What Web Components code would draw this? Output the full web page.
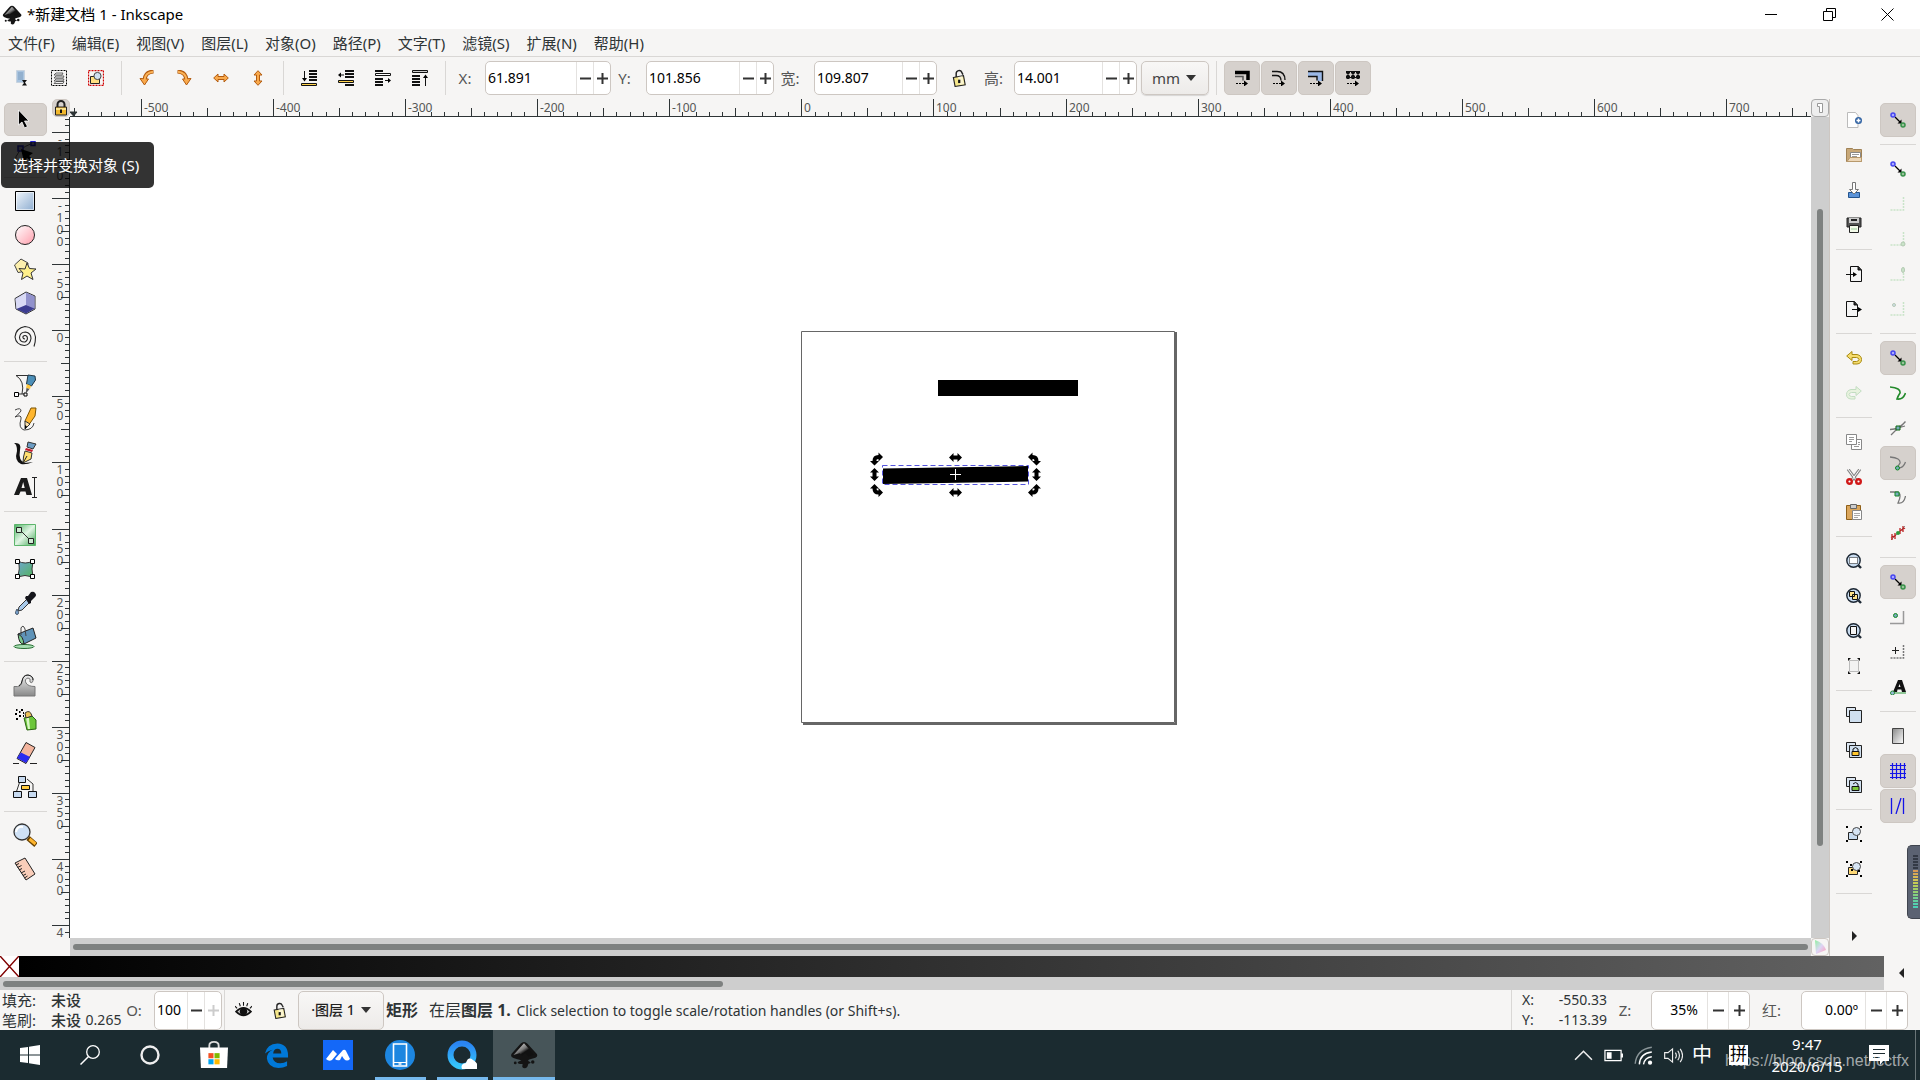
<!DOCTYPE html>
<html lang="zh-CN">
<head>
<meta charset="utf-8">
<title>*新建文档 1 - Inkscape</title>
<style>
  html, body { margin: 0; height: 100%; }
  body {
    display: flex;
    flex-direction: column;
    overflow: hidden;
    background: #f6f5f4;
    color: #2e3436;
    font: 15px/20px "Noto Sans", "Noto Sans CJK SC", sans-serif;
    --line: #d9d7d5;
    --edge: #cdc7c2;
    --trough: #cecece;
    --thumb: #7e8180;
  }
  main { flex: 1; min-height: 0; display: flex; }
  ink-desktop { flex: 1; min-width: 0; }
</style>
</head>
<body>
  <title-bar>*新建文档 1 - Inkscape</title-bar>
  <menu-bar></menu-bar>
  <select-toolbar></select-toolbar>
  <main>
    <tool-box></tool-box>
    <ink-desktop></ink-desktop>
    <command-bar></command-bar>
    <snap-bar></snap-bar>
  </main>
  <color-palette></color-palette>
  <status-bar></status-bar>
  <task-bar></task-bar>
  <tool-tip>选择并变换对象 (S)</tool-tip>
  <level-meter></level-meter>

<script>
const LOCK_OPEN = `<path d="M5.5 7V4a2.600 2.600 0 0 1 5-1l1 2" fill="none" stroke="#222" stroke-width="1.3"/><path d="M3 7.5l9-1.500 1.500 8-9 1.500z" fill="#f5e68a" stroke="#222"/><path d="M7 7l4-.7L12.500 13.500 9 14z" fill="#fff" opacity=".6"/><path d="M8.200 9.500v3" stroke="#111" stroke-width="2"/>`;
const NODES = `<path d="M5 5l6 6" stroke="#000" stroke-width="1.3"/><path d="M11.500 7.500v4h-4z" fill="#000"/><circle cx="3" cy="3" r="2" fill="#aaf" stroke="#4646f0" stroke-width="1.5"/><circle cx="13" cy="13" r="2" fill="#9bc29b" stroke="#38924a" stroke-width="1.5"/>`;
const LENS = `<circle cx="7.5" cy="7.5" r="6.7" fill="#c9dcf0" stroke="#1c2733" stroke-width="1.4"/><path d="M12.500 12.500l2.500 2.500" stroke="#1c2733" stroke-width="2.4"/>`;
const DUP = `<path d="M.5 .5h9v9h-9z" fill="#dbe6f2" stroke="#222"/><path d="M3.500 3.500h12v12h-12z" fill="#cfdfef" stroke="#222"/>`;
const CORNERS = `<path d="M0 0h2v2H0zM14 0h2v2h-2zM0 14h2v2H0zM14 14h2v2h-2z" fill="#000"/>`;
const CORNER_DOTS = `<path d="M13.500 1v13H0" fill="none" stroke="#8c8" stroke-dasharray="2 1" stroke-width="1.5"/>`;
const LOGO = `<linearGradient id="g" x1="0" y1="0" x2="1" y2="1"><stop offset="0" stop-color="#fff"/><stop offset=".45" stop-color="#777"/><stop offset=".6" stop-color="#111"/></linearGradient>
  <path d="M8 .5Q9 .5 10 1.600L15.200 7.300Q16.200 8.700 14.500 9.500L11 10.500Q9.500 11.200 11.500 12Q12.500 12.800 10.500 13L10 14.500Q8.500 16.500 7 14.800L7.200 13.200Q4 13.200 4.500 12L6.500 11Q4 10.600 2 9.700Q0 9 .9 7.300L6 1.600Q7 .5 8 .5z" fill="#141414"/>
  <path d="M8 1.300L13.800 7.800 10.500 9 8.800 7 7 8.600 5.500 7 2 8z" fill="url(#g)"/>
  <circle cx="13" cy="12" r="1" fill="#141414"/><circle cx="3" cy="12.5" r=".8" fill="#141414"/>`;

// every drawing is [view box size, markup]
const ICONS = {
  logo: [16, LOGO],
  selectAll: [16, `<path d="M2.500 .5h8v12h-8z" fill="#a9c4df" stroke="#c7d3df"/><path d="M4 3h5M4 5h5M4 7h5M4 9h5" stroke="#7d9dbe"/><path d="M8 10h5l-2 2.500 2 3H8l2-2.500z" fill="#111"/>`],
  selectLayers: [16, `<path d="M.5 .5h15v15H.5z" fill="none" stroke="#000" stroke-dasharray="2 1"/><path d="M3 5l2-2h7l-1 2zM3 8l2-2h8l-1 2zM3 11l2-2h8l-1 2zM3 13.500l2-2h8l-1 2z" fill="#eee" stroke="#444" stroke-width=".8"/>`],
  deselect: [16, `<path d="M.5 .5h15v15H.5z" fill="none" stroke="#d00000" stroke-width="1.3" stroke-dasharray="2 1"/><path d="M2.500 6.500h9v7h-9z" fill="#ffdf80" stroke="#222"/><circle cx="9.5" cy="6" r="3.6" fill="#cfe0f2" stroke="#444"/>`],
  rotateLeft: [16, `<path d="M14.500 1.500Q6 2 5.500 10" fill="none" stroke="#b35c10" stroke-width="4"/><path d="M1 8.500l4.500 6.500 4-6z" fill="#f9a94b" stroke="#b35c10"/><path d="M14 1.700Q6 2.500 5.500 10" fill="none" stroke="#fbb257" stroke-width="2"/>`],
  rotateRight: [16, `<path d="M1.500 1.500Q10 2 10.500 10" fill="none" stroke="#b35c10" stroke-width="4"/><path d="M15 8.500l-4.500 6.500-4-6z" fill="#f9a94b" stroke="#b35c10"/><path d="M2 1.700Q10 2.500 10.500 10" fill="none" stroke="#fbb257" stroke-width="2"/>`],
  flipH: [16, `<path d="M.7 8l4.300-4v2.500h6V4l4.300 4-4.300 4V9.500H5V12z" fill="#f9a94b" stroke="#b35c10"/>`],
  flipV: [16, `<path d="M8 .7l4 4.300H9.500v6H12l-4 4.300L4 11h2.500V5H4z" fill="#f9a94b" stroke="#b35c10"/>`],
  toBottom: [16, `<path d="M8 1h8M8 4h8M8 7h8M8 10h8" stroke="#111" stroke-width="2"/><path d="M.5 13.500h15v2H.5z" fill="#ffd24a" stroke="#111"/><path d="M3.500 1v8" stroke="#111"/><path d="M1 8h5l-2.500 3.500z"/>`],
  lower: [16, `<path d="M7 1h9M7 4h9M7 7h9M7 15h9" stroke="#111" stroke-width="2"/><path d="M.5 10.500h15v2H.5z" fill="#ffd24a" stroke="#111"/><path d="M3 5h3" stroke="#111"/><path d="M0 5l3-2.500v5z"/>`],
  raise: [16, `<path d="M0 1h8M0 9h8M0 12h8M0 15h8" stroke="#111" stroke-width="2"/><path d="M.5 3.500h15v2H.5z" fill="#fff" stroke="#111"/><path d="M10 10.500h4" stroke="#111"/><path d="M16 10.500l-3-2.500v5z"/>`],
  toTop: [16, `<path d="M0 6h8M0 9h8M0 12h8M0 15h8" stroke="#111" stroke-width="2"/><path d="M.5 .5h15v2H.5z" fill="#ccc" stroke="#111"/><path d="M13.500 7v9" stroke="#111"/><path d="M11 8h5l-2.500-3.500z"/>`],
  lockOpen: [16, LOCK_OPEN],
  scaleStroke: [16, `<path d="M1 2.500h13V10" fill="none" stroke="#000" stroke-width="3.5"/><path d="M1 6.500h8v4" fill="none" stroke="#555" stroke-width="1.5"/><path d="M2 13.500h8" stroke="#000" stroke-dasharray="2 1"/><path d="M10 10.500l4 3-4 3z"/>`],
  scaleCorners: [16, `<path d="M1 1.500h5Q14 1.500 14 10M1 5.500h4Q10 5.500 10 10.500" fill="none" stroke="#111" stroke-width="1.3"/><path d="M2 13.500h8" stroke="#000" stroke-dasharray="2 1"/><path d="M10 10.500l4 3-4 3z"/>`],
  moveGradient: [16, `<path d="M0 2h14v9h-5V7H0z" fill="#9bb8e6"/><path d="M0 1.500h14.500V11M0 6.500h9v4" fill="none" stroke="#111" stroke-width="1.4"/><path d="M2 13.500h8" stroke="#000" stroke-dasharray="2 1"/><path d="M10 10.500l4 3-4 3z"/>`],
  movePattern: [16, `<path d="M1 1h14v2H1zM1 6h14v2H1z" fill="#111"/><path d="M3 1v8M8 1v8M13 1v8" stroke="#111" stroke-width="3"/><path d="M5 2h1v1H5zM10 2h1v1h-1zM5 6h1v1H5zM10 6h1v1h-1zM0 4h16v1H0z" fill="#d6d1cd"/><path d="M3 3v3M8 3v3M13 3v3" stroke="#111"/><path d="M2 13.500h8" stroke="#000" stroke-dasharray="2 1"/><path d="M10 10.500l4 3-4 3z"/>`],

  arrow: [24, `<path d="M5.500 3v15l3.500-3 2.500 6 3-1.500-3-5.500H16z" fill="#000" stroke="#fff" stroke-width=".8"/>`],
  node: [24, `<path d="M2 22Q2 8 20 2" fill="none" stroke="#555"/><path d="M5 5h5v5H5zM18 .5h4v4h-4z" fill="#aac" stroke="#22c" stroke-width="1.5"/><path d="M8 8l3 13 3-4 6 5 2-2-6-5 4-3z"/>`],
  rect: [24, `<linearGradient id="g" x2="1" y2="1"><stop stop-color="#f2f7fc"/><stop offset="1" stop-color="#8cacd0"/></linearGradient><path d="M2.500 2.500h19v19h-19z" fill="url(#g)" stroke="#000"/><path d="M3.500 3.500h17v17h-17z" fill="none" stroke="#fff" opacity=".6"/>`],
  circle: [24, `<linearGradient id="g" x2="1" y2="1"><stop stop-color="#fff"/><stop offset="1" stop-color="#ff9eac"/></linearGradient><circle cx="12" cy="12" r="9.5" fill="url(#g)" stroke="#222"/>`],
  star: [24, `<path d="M1.500 8L8 2l7 4-1 8-9 1.500z" fill="#fdf0ae" stroke="#444"/><path d="M14 6l2.500 5.500 6.500.5-5 4 2 6.500-6-3.500-5.500 3.500 1.500-6.500-4-4.500 6 .5z" fill="#fff08a" stroke="#333"/>`],
  cube: [24, `<path d="M2 7.500L13 1l9 4v13l-9 5-10-5z" fill="#c3c4ea" stroke="#333"/><path d="M13 1.500l8.500 4v12L13 14z" fill="#9292cc"/><path d="M2.500 8L13 2v12L3.500 18z" fill="#d9daf5"/><path d="M3.500 18L13 14l8.500 3.500L13 22.500z" fill="#3c3c90"/>`],
  spiral: [24, `<path d="M12 14Q9.500 13.500 10 11.500Q12 9.500 14 11.500Q15.500 15 12 17Q7 17.500 6.500 12.500Q7 7 12.500 7Q18 8 18 13.500Q17 20 11.500 20.500Q3 20 2 12Q3 3 12 1.500Q21 2 22.500 12Q22.500 18 21 21.500" fill="none" stroke="#222" stroke-width="1.1"/>`],
  pen: [24, `<path d="M3 2.500h13M3 2.500Q12 8 9 21M5 21h7" fill="none" stroke="#333"/><path d="M1.500 19.500h4v4h-4zM11 20h3v3h-3z" fill="#fff" stroke="#000"/><path d="M15 2l7 1 .5 4-4 6-5-2z" fill="#4c8fb8" stroke="#1f3442"/><path d="M14 11l4 2-1 3-4-1z" fill="#ffc83d"/><path d="M13.500 15l3 1-4 5z" fill="#555"/>`],
  pencil: [24, `<path d="M2 3Q8 0 8 4Q4 9 2 10Q9 7 8 12Q5 21 11 23Q20 23 21 16" fill="none" stroke="#444"/><path d="M12 14L18 1h5l-1 8-7 10z" fill="#ffb62e" stroke="#7b5300"/><path d="M12 14l5 3-5 5z" fill="#fbe0a9" stroke="#333"/><path d="M12 18l2 1.500L12 22z"/>`],
  calligraphy: [24, `<path d="M1 2Q9 1 7 9Q5 20 12 22L20 21Q13 24 8 23Q1 20 4 10Q4 3 1 2z" fill="#111"/><path d="M15 1l8 2-3 5-6-2z" fill="#6d9dc4" stroke="#333"/><path d="M13 7l7 2-1 2-7-2z" fill="#c41a2b"/><path d="M12 10l7 2-1 6-8 4 .5-6z" fill="#ffe070" stroke="#333"/><path d="M10 22l4-7" stroke="#222"/>`],
  text: [24, `<path d="M1 20L8 3h6l5 17h-5.500l-1-3.500H7.500L6 20zM8.500 13h3.200l-1.500-6z" fill="#1b1b1b" fill-rule="evenodd"/><path d="M19 2.500h5M19 22.500h5M21.500 3v19" stroke="#222"/>`],
  gradient: [24, `<linearGradient id="g" x2="1" y2="1"><stop stop-color="#4fb466"/><stop offset=".5" stop-color="#e2f5e4"/><stop offset="1" stop-color="#3ea553"/></linearGradient><path d="M1.500 1.500h21v21h-21z" fill="url(#g)" stroke="#5db56c"/><path d="M7 7l10 10" stroke="#333"/><path d="M3.500 4.500h5v5h-5zM15.500 15.500h5v5h-5z" fill="#cfe9d3" stroke="#222"/>`],
  mesh: [24, `<linearGradient id="g" x2="1" y2="1"><stop stop-color="#6fa5d3"/><stop offset="1" stop-color="#54b45e"/></linearGradient><path d="M5 4Q12 8 20 4Q18 12 20 20Q12 17 4 20Q8 12 5 4z" fill="url(#g)" stroke="#333"/><path d="M2.500 2.500h4v4h-4zM17.500 2.500h4v4h-4zM2.500 17.500h4v4h-4zM17.500 17.500h4v4h-4z" fill="#fff" stroke="#000"/>`],
  dropper: [24, `<path d="M6 16L15 7l3 3-9 9-4 1z" fill="#a8c9ea" stroke="#333"/><path d="M13 5l2 0 3-4q3-1 4 1 2 2 0 4l-4 4v2l-2 1-4-6z" fill="#15151b"/><path d="M4 18q-3 5 0 5.500q3-.5 0-5.500" fill="#7ea9d8" stroke="#456"/>`],
  bucket: [24, `<ellipse cx="11" cy="21.5" rx="10" ry="2" fill="#a8e0b3" stroke="#2a6e35"/><path d="M5 9l15-6 3 10-12 6z" fill="#5f93b8" stroke="#222"/><path d="M5 9q5 2 6 10-5 1-6-10" fill="#7bc78b" stroke="#222"/><path d="M8 10V3q2-4 4 1l1 7" fill="none" stroke="#444"/>`],
  tweak: [24, `<linearGradient id="g" x2="0" y2="1"><stop stop-color="#eee"/><stop offset="1" stop-color="#888"/></linearGradient><path d="M1 13.500q8 1 8-5Q10 2 15 2q6 1 5 6-1 3-3 1 1-4-2-4-4 1-2 5 2 3.500 9 3.500V23H1z" fill="url(#g)" stroke="#777"/><path d="M6 13Q9 10 9 8Q10 2 15 2q5 1 5 5" fill="none" stroke="#222"/>`],
  spray: [24, `<path d="M3 3h1.500M6 5h1.500M2 7h2M8 3h2M6 9h2M10 6h1M3 12h2M10 9h1" stroke="#000" stroke-width="2"/><path d="M11 11l8-2 4 4v9l-9 1z" fill="#6cc63a" stroke="#2a6413"/><path d="M13 11l3 0 1 11h-2z" fill="#d8f7c4"/><path d="M12 6q5-4 7 3l-6 2z" fill="#edc35a" stroke="#333"/>`],
  eraser: [24, `<path d="M13 1.500l9 5-9 16-9-5z" fill="#f3b49d" stroke="#222"/><path d="M8 11.500l9 4.500-4 6-9-5z" fill="#2b2bf0"/><path d="M0 22.500h6M17 22.500h7" stroke="#222"/>`],
  connector: [24, `<path d="M7 6L3 18M14 4l6 5v9" fill="none" stroke="#333"/><path d="M5.500 1.500h7v6h-7zM.5 16.500h8v6h-8zM15.500 16.500h8v6h-8z" fill="#c7daf0" stroke="#111"/><path d="M8.500 10.500h8v4h-8z" fill="#ffcb3e" stroke="#111"/>`],
  zoomTool: [24, `<circle cx="9" cy="9" r="8" fill="#cfe1f5" stroke="#333" stroke-width="1.3"/><path d="M3 9q1-6 7-5" fill="none" stroke="#fff" stroke-width="2"/><path d="M15 15l8 7" stroke="#6a4200" stroke-width="5"/><path d="M16.500 16l6 5" stroke="#ffb52d" stroke-width="3"/>`],
  measure: [24, `<path d="M2 6l10-5 10 16-9 6z" fill="#f9cdb9" stroke="#222"/><path d="M3 8l3-1.500M4.500 10.500l4-2M6 13l3-1.500M8 16l4-2M10 18.500l3-1.500M11.500 21l3-2" stroke="#222"/>`],

  newDoc: [16, `<path d="M1.500 .5h8l2.500 3v12H1.500z" fill="#fff" stroke="#bbb"/><circle cx="12.5" cy="8.5" r="3.5" fill="#3465a4"/><path d="M12.500 6.500v4M10.500 8.500h4" stroke="#fff" stroke-width="1.5"/>`],
  open: [16, `<path d="M.5 1.500h6l1 1h8v12H.5z" fill="#c8a878" stroke="#a08256"/><path d="M4.500 5.500h10v5h-10z" fill="#fff" stroke="#888"/><path d="M6 7.500h7M6 9.500h5" stroke="#999"/><path d="M1 14.500l3-4h11.500v4z" fill="#edd7b8" stroke="#b8996c"/>`],
  save: [16, `<path d="M2.500 10.500h11v5h-11z" fill="#5b93d8" stroke="#23548f"/><path d="M6.500 .5h3v7h3L8 12 3.500 7.500h3z" fill="#fff" stroke="#777"/>`],
  print: [16, `<path d="M1 1h14v9H1z" fill="#555" stroke="#222"/><path d="M3 1h10v5H3z" fill="#ccc"/><path d="M5 3h6" stroke="#222" stroke-width="2"/><path d="M3.500 8.500h9v7h-9z" fill="#f4fbea" stroke="#222"/><path d="M5 12h6" stroke="#9c9"/>`],
  importDoc: [16, `<path d="M4.500 .5h8l3 3.500v11.500h-11z" fill="#f4f4f4" stroke="#111"/><path d="M12 .5V4h3.500" fill="#222" stroke="#111"/><path d="M0 8.500h8" stroke="#111"/><path d="M7 6l4 2.500L7 11z"/>`],
  exportDoc: [16, `<path d="M.5 .5h8l3 3.500v11.500H.5z" fill="#f4f4f4" stroke="#111"/><path d="M8 .5V4h3.500" fill="#222" stroke="#111"/><path d="M6 8.500h8" stroke="#111"/><path d="M12 6l4 2.500-4 2.500z"/>`],
  undo: [16, `<path d="M.7 6L6 1.500v3h5q4.500 1 4.500 5t-4.500 4.500H7v-2.500h3.500Q13 11 13 9.500T10.500 7.500H6v3z" fill="#f6dc6c" stroke="#a88a12"/>`],
  redo: [16, `<path d="M15.300 6L10 1.500v3H5Q.5 5.500.5 9.500T5 14h4v-2.500H5.500Q3 11 3 9.500t2.500-2H10v3z" fill="#d4f0c0" stroke="#7b7"/>`],
  copy: [16, `<path d="M5.500 5.500h10v10h-10z" fill="#fff" stroke="#888"/><path d="M.5 .5h10v10H.5z" fill="#fff" stroke="#888"/><path d="M3 3.500h5M3 5.500h5M3 7.500h3M12 8.500h2M12 10.500h2M8 12.500h5" stroke="#999"/>`],
  cut: [16, `<path d="M2 0l8 11M14 0L6 11" stroke="#888" stroke-width="3"/><path d="M2 0l8 11M14 0L6 11" stroke="#fff"/><circle cx="3.5" cy="12.5" r="2.3" fill="#fff" stroke="#d01818" stroke-width="2.4"/><circle cx="12.5" cy="12.5" r="2.3" fill="#fff" stroke="#d01818" stroke-width="2.4"/>`],
  paste: [16, `<path d="M.5 1.500h14v14H.5z" fill="#dba65c" stroke="#8f5f18"/><path d="M4.500 .5h6v4h-6z" fill="#ccc" stroke="#666"/><path d="M6.500 6.500h9v9h-9z" fill="#fff" stroke="#888"/><path d="M8 9.500h6M8 11.500h6M8 13.500h4" stroke="#aaa"/>`],
  zoomSel: [16, LENS + `<path d="M3.500 4.500h8v6h-8z" fill="#fff" stroke="#111" stroke-dasharray="1 1"/>`],
  zoomDraw: [16, LENS + `<path d="M3.500 3.500h5v5h-5zM6.500 6.500h5v5h-5z" fill="#ffe38a" stroke="#111"/>`],
  zoomPage: [16, LENS + `<path d="M4.500 3.500h6v8h-6z" fill="#f4f4f4" stroke="#111"/>`],
  fitPage: [16, `<path d="M3.500 2.500h9v11h-9z" fill="#f2f2f2" stroke="#bbb"/><path d="M2 0h3L2 3zM14 0h-3l3 3zM2 16h3l-3-3zM14 16h-3l3-3z" fill="#111"/>`],
  duplicate: [16, DUP],
  clone: [16, DUP + `<path d="M7 9V7q2.500-3 5 0v2" fill="none" stroke="#111"/><path d="M6 9.500h7v4H6z" fill="#ffc62e" stroke="#111"/>`],
  unlink: [16, DUP + `<path d="M7 7q2.500-3 5 0v2" fill="none" stroke="#111"/><path d="M6 9.500h7v4H6z" fill="#7cc83a" stroke="#111"/>`],
  group: [16, CORNERS + `<path d="M2.500 6.500h9v7h-9z" fill="#c9dcf0" stroke="#222"/><circle cx="10.5" cy="5.5" r="4" fill="#d7e5f4" stroke="#444"/>`],
  ungroup: [16, CORNERS + `<path d="M2.500 6.500h9v7h-9z" fill="#ffd976" stroke="#222"/><circle cx="10.5" cy="5.5" r="4" fill="#d7e5f4" stroke="#444"/><path d="M5 8h2v2H5zM12 9h2v2h-2zM4 3h2v2H4z"/>`],

  snap: [16, NODES],
  snapBox: [16, CORNER_DOTS],
  snapBoxCorner: [16, CORNER_DOTS + `<circle cx="13" cy="13" r="2" fill="#8c8" stroke="#585"/>`],
  snapBoxMid: [16, CORNER_DOTS + `<ellipse cx="13" cy="4" rx="1.5" ry="2.5" fill="#8c8" stroke="#585"/>`],
  snapBoxCenter: [16, CORNER_DOTS + `<circle cx="4" cy="4" r="1.5" fill="#9bd" stroke="#585"/>`],
  snapPath: [16, `<path d="M0 2Q11 3 10 8Q8 11 7 14Q13 15 15.500 8" fill="none" stroke="#238a2b" stroke-width="1.6"/>`],
  snapCross: [16, `<path d="M0 9.500q9 0 15.500-8M1 15l7-7 7-2" fill="none" stroke="#777" stroke-width="1.3"/><path d="M6 6h4v4H6z" fill="#7ab" stroke="#161"/>`],
  snapCusp: [16, `<path d="M0 2Q11 3 10 8L7 13Q13 14 15.500 7" fill="none" stroke="#777" stroke-width="1.3"/><circle cx="7.5" cy="13" r="2" fill="#7ab" stroke="#182"/>`],
  snapSmooth: [16, `<path d="M0 2h8q4 3 0 11 6 1 7.500-7" fill="none" stroke="#777" stroke-width="1.3"/><path d="M5 2h4v4H5z" fill="#7ab" stroke="#182"/>`],
  snapMid: [16, `<path d="M1 15L15 1" stroke="#888"/><path d="M2 9v6M5 8v6M1 13l5-3M10 3v6M13 1v6M10 6l5-3" stroke="#b22" stroke-width="1.3"/><circle cx="8" cy="8" r="2" fill="#2a9a3a"/>`],
  snapCenter: [16, `<path d="M13.500 2v12.500H0" fill="none" stroke="#999" stroke-width="1.5"/><circle cx="5.5" cy="6.5" r="2" fill="#7ab" stroke="#182"/>`],
  snapRotation: [16, `<path d="M13.500 1v13H0" fill="none" stroke="#777" stroke-width="1.5" stroke-dasharray="2 1"/><path d="M5.500 3v7M2 6.500h7" stroke="#222"/>`],
  snapText: [16, `<path d="M3 13L8 1h4l4 12h-4l-.7-2.500H7.500L7 13zM8.500 8h2l-1-3z" fill="#111" fill-rule="evenodd"/><path d="M3 14h13" stroke="#2a9a3a"/><circle cx="2.5" cy="14" r="2" fill="#9bd" stroke="#2a8a3a"/>`],
  snapPage: [16, `<linearGradient id="g" x2="1" y2="1"><stop stop-color="#888"/><stop offset="1" stop-color="#fff"/></linearGradient><path d="M2.500 .5h11v15h-11z" fill="url(#g)" stroke="#444"/>`],
  snapGrid: [16, `<path d="M0 2.500h16M0 6.500h16M0 10.500h16M0 14.500h16M2.500 0v16M6.500 0v16M10.500 0v16M14.500 0v16" stroke="#1414e8" stroke-width="1.2"/>`],
  snapGuide: [16, `<path d="M1.500 0v16M13.500 0v16M11 0L6 16" stroke="#1414e8" stroke-width="1.3"/>`],

  lockRuler: [16, `<path d="M4.500 7V4.500a3.500 3.500 0 0 1 7 0V7" fill="none" stroke="#222" stroke-width="2"/><path d="M2.500 7h11v8h-11z" fill="#f0b72c" stroke="#222"/><path d="M3 8h10v2H3z" fill="#fce28a"/><path d="M8 9.500v3.500" stroke="#111" stroke-width="2"/>`],
  eye: [16, `<path d="M1 9q7-7 14 0q-7 7-14 0z" fill="#ccc" stroke="#111" stroke-width="1.5"/><circle cx="8" cy="9" r="3.5" fill="#111"/><path d="M2 6L0 4M5 4L4 1M8 3.500V0M11 4l1-3M14 6l2-2" stroke="#111"/>`],

  windows: [20, `<path d="M0 3l8-1v7.500H0zM9 1.800L20 0v9.500H9zM0 10.500h8V18l-8-1zM9 10.500h11V20L9 18.200z" fill="#fff"/>`],
  search: [20, `<circle cx="13" cy="7" r="6.3" fill="none" stroke="#fff" stroke-width="1.3"/><path d="M8.500 11.500L.5 19.500" stroke="#fff" stroke-width="1.5"/>`],
  cortana: [20, `<circle cx="10" cy="10" r="8.5" fill="none" stroke="#eee" stroke-width="2.4"/>`],
  store: [30, `<path d="M10 9V5q0-4 5-4t5 4v4" fill="none" stroke="#ddd" stroke-width="2"/><path d="M0 7h30l-1 22H1z" fill="#fff"/><path d="M9 13h5.500v5.500H9z" fill="#f25022"/><path d="M15.500 13H21v5.500h-5.500z" fill="#7fba00"/><path d="M9 19.500h5.500V25H9z" fill="#00a4ef"/><path d="M15.500 19.500H21V25h-5.500z" fill="#ffb900"/>`],
  edge: [26, `<path d="M1 11Q3 1 14 0.500Q25 1 25 13v2H9q1 6 8 6 4 0 7-2v5q-4 2-9 2Q4 25 3 16q0-6 6-9Q4 8 1 11zM9.500 11H18q0-5-4-5t-4.500 5z" fill="#0078d7" fill-rule="evenodd"/>`],
  meeting: [30, `<path d="M0 0h30v30H0z" fill="#1468f8"/><path d="M3 19l7-9 4 4-5 6q-3 2-6-1zM12 19l8-9q2-1 3 1l4 8q-3 3-6 0l-2-3-2 4q-3 1-5-1z" fill="#fff"/>`],
  phone: [30, `<circle cx="15" cy="15" r="15" fill="#1d86e0"/><path d="M8.500 4h13v22h-13z" fill="none" stroke="#fff" stroke-width="1.6"/><path d="M8 22.500h14" stroke="#fff"/><path d="M13.500 24h3" stroke="#fff" stroke-width="1.5"/>`],
  qq: [30, `<linearGradient id="g" x2="0" y2="1"><stop stop-color="#2a84f2"/><stop offset="1" stop-color="#35c7fb"/></linearGradient><circle cx="15" cy="15" r="11.5" fill="none" stroke="url(#g)" stroke-width="6"/><path d="M15 29q-2-5 4-6 2-7 7-3 6 3 4 9z" fill="#fff"/>`],
  inkscape: [16, LOGO],
  chevron: [18, `<path d="M1 13l8-8 8 8" fill="none" stroke="#eee" stroke-width="1.5"/>`],
  battery: [20, `<path d="M1 4.500h17v11H1z" fill="none" stroke="#fff" stroke-width="1.3"/><path d="M18 8h2v4h-2zM3 6.500h5v7H3z" fill="#fff"/>`],
  wifi: [16, `<path d="M1 15Q2 3 15 1" fill="none" stroke="#8a9598" stroke-width="1.2"/><path d="M4.500 15.500Q5 6 15 5M8 15.500Q9 9.500 15 9" fill="none" stroke="#fff" stroke-width="1.2"/><circle cx="13.5" cy="14" r="1.8" fill="#fff"/>`],
  sound: [20, `<path d="M.7 7h3.500L9 3v14l-4.800-4H.7z" fill="none" stroke="#eee" stroke-width="1.2"/><path d="M12 7q2 3 0 6M14.500 5q3.500 5 0 10M17 3q5 7 0 14" fill="none" stroke="#eee" stroke-width="1.2"/>`],
  notice: [20, `<path d="M0 0h20v16h-6l-3 4v-4H0z" fill="#fff"/><path d="M4 4.500h12M4 8.500h12M4 12.500h7" stroke="#1c2b30" stroke-width="1.2"/>`]
};

class InkIcon extends HTMLElement {
  connectedCallback() {
    const [box, art] = ICONS[this.getAttribute('name')];
    this.attachShadow({ mode: 'open' }).innerHTML = `
      <style>
        :host { display: block; width: var(--icon, 16px); height: var(--icon, 16px); }
        svg { display: block; width: 100%; height: 100%; }
      </style>
      <svg viewBox="0 0 ${box} ${box}" aria-hidden="true">${art}</svg>`;
  }
}

class IconButton extends HTMLElement {
  connectedCallback() {
    const pressed = this.hasAttribute('pressed');
    this.attachShadow({ mode: 'open' }).innerHTML = `
      <style>
        :host { display: block; width: 36px; height: 34px; }
        button {
          display: grid; place-items: center; width: 100%; height: 100%; padding: var(--pad, 0);
          border: 1px solid transparent; border-radius: 5px; background: none; box-sizing: border-box;
        }
        button[aria-pressed=true] { background: #d6d1cd; border-color: var(--edge); }
        :host([faded]) ink-icon { opacity: .4; }
      </style>
      <button type="button" aria-label="${this.getAttribute('icon')}" aria-pressed="${pressed}">
        <ink-icon name="${this.getAttribute('icon')}"></ink-icon>
      </button>`;
  }
}

class SpinField extends HTMLElement {
  connectedCallback() {
    const get = name => this.getAttribute(name);
    this.attachShadow({ mode: 'open' }).innerHTML = `
      <style>
        :host { display: flex; align-items: center; height: 34px; color: #555; }
        label { box-sizing: border-box; width: var(--label, 32px); padding-right: 8px; text-align: center; white-space: nowrap; }
        div {
          display: flex; box-sizing: border-box; width: var(--box, 126px); height: 100%; overflow: hidden;
          border: 1px solid var(--edge); border-radius: 5px; background: #fff;
        }
        input {
          flex: 1; min-width: 0; padding: 0 var(--end, 2px) 0 2px; border: 0; background: none;
          font: inherit; font-size: 14px; color: #000; text-align: var(--align, left);
        }
        button {
          display: grid; place-items: center; width: var(--step, 17px); padding: 0;
          border: 0; border-left: 1px solid #e4e2e0; background: none; color: #333;
        }
        button:disabled { color: #ccc; }
        svg { width: 11px; height: 11px; }
      </style>
      <label for="value">${get('label')}</label>
      <div>
        <input id="value" value="${get('value')}">
        <button type="button" aria-label="-"><svg viewBox="0 0 11 11"><path d="M0 5.500h11" stroke="currentColor" stroke-width="2"/></svg></button>
        <button type="button" aria-label="+" ${this.hasAttribute('full') ? 'disabled' : ''}><svg viewBox="0 0 11 11"><path d="M0 5.500h11M5.500 0v11" stroke="currentColor" stroke-width="2"/></svg></button>
      </div>`;
  }
}

class TitleBar extends HTMLElement {
  connectedCallback() {
    this.attachShadow({ mode: 'open' }).innerHTML = `
      <style>
        :host { display: flex; align-items: center; height: 29px; padding-right: 4px; background: #fff; color: #000; }
        ink-icon { --icon: 20px; margin: 0 5px 0 2px; }
        span { flex: 1; line-height: 28px; height: 29px; }
        button { width: 58px; height: 29px; padding: 0; border: 0; background: none; }
        svg { display: block; margin: auto; }
        path { fill: none; stroke: #000; }
      </style>
      <ink-icon name="logo"></ink-icon>
      <span><slot></slot></span>
      <button aria-label="最小化"><svg width="13" height="13"><path d="M0 6.500h12"/></svg></button>
      <button aria-label="还原"><svg width="13" height="13"><path d="M.5 3.500h9v9h-9zM3.500 3.500v-3h9v9h-3"/></svg></button>
      <button aria-label="关闭"><svg width="13" height="13"><path d="M.5 .5l12 12M12.500 .5l-12 12"/></svg></button>`;
  }
}

class MenuBar extends HTMLElement {
  connectedCallback() {
    const menus = ['文件(F)', '编辑(E)', '视图(V)', '图层(L)', '对象(O)', '路径(P)', '文字(T)', '滤镜(S)', '扩展(N)', '帮助(H)'];
    this.attachShadow({ mode: 'open' }).innerHTML = `
      <style>
        :host { display: block; height: 27px; border-bottom: 1px solid var(--line); }
        nav { display: flex; height: 100%; }
        button { padding: 0 9px 0 8px; border: 0; background: none; font: inherit; color: inherit; white-space: nowrap; }
      </style>
      <nav>${menus.map(m => `<button type="button">${m}</button>`).join('')}</nav>`;
  }
}

class SelectToolbar extends HTMLElement {
  connectedCallback() {
    const group = (names, state = '') => names.map(n => `<icon-button icon="${n}" ${state}></icon-button>`).join('');
    this.attachShadow({ mode: 'open' }).innerHTML = `
      <style>
        :host { display: flex; align-items: center; height: 42px; padding: 0 4px; }
        .group { display: flex; gap: 1px; }
        hr { width: 1px; height: 34px; margin: 0 7px; border: 0; background: var(--line); }
        .y { --label: 35px; --box: 128px; }
        .w { --label: 40px; --box: 123px; }
        .h { --label: 33px; --box: 123px; }
        .lock { width: 44px; --icon: 18px; }
        .unit {
          width: 68px; height: 34px; margin-left: 4px; padding: 0 10px; border: 1px solid var(--edge); border-radius: 5px;
          background: linear-gradient(#f8f7f6, #edebe9); box-shadow: 0 1px 1px #0002;
          font: inherit; color: #444; appearance: none;
        }
        .pick { position: relative; display: flex; }
        .pick svg { position: absolute; right: 13px; top: 14px; pointer-events: none; }
      </style>
      <div class="group">${group(['selectAll', 'selectLayers', 'deselect'])}</div><hr>
      <div class="group">${group(['rotateLeft', 'rotateRight', 'flipH', 'flipV'])}</div><hr>
      <div class="group">${group(['toBottom', 'lower', 'raise', 'toTop'])}</div><hr>
      <spin-field label="X:" value="61.891"></spin-field>
      <spin-field class="y" label="Y:" value="101.856"></spin-field>
      <spin-field class="w" label="宽:" value="109.807"></spin-field>
      <icon-button class="lock" icon="lockOpen"></icon-button>
      <spin-field class="h" label="高:" value="14.001"></spin-field>
      <div class="pick">
        <select class="unit" aria-label="单位"><option>mm</option></select>
        <svg width="10" height="7"><path d="M0 0h10L5 6z" fill="#333"/></svg>
      </div><hr>
      <div class="group">${group(['scaleStroke', 'scaleCorners', 'moveGradient', 'movePattern'], 'pressed')}</div>`;
  }
}

// a column of buttons; "|" is a separator, "*" marks pressed, "~" marks faded
class ButtonColumn extends HTMLElement {
  connectedCallback() {
    const cells = this.items.map(item => {
      if (item === '|') return '<hr>';
      const state = item[0] === '*' ? 'pressed' : item[0] === '~' ? 'faded' : '';
      return `<icon-button icon="${item.replace(/^[*~]/, '')}" ${state}></icon-button>`;
    });
    this.attachShadow({ mode: 'open' }).innerHTML = `
      <style>
        :host { display: flex; flex-direction: column; gap: 1px; box-sizing: border-box; padding-top: 4px; flex: none; overflow: hidden; }
        hr { flex: none; width: 100%; height: 1px; margin: 6px 0; border: 0; background: var(--line); }
        icon-button { flex: none; }
        ${this.look}
      </style>
      ${cells.join('')}${this.tail || ''}`;
  }
}

class ToolBox extends ButtonColumn {
  items = ['*arrow', 'node', '|', 'rect', 'circle', 'star', 'cube', 'spiral', '|', 'pen', 'pencil', 'calligraphy', 'text', '|',
    'gradient', 'mesh', 'dropper', 'bucket', '|', 'tweak', 'spray', 'eraser', 'connector', '|', 'zoomTool', 'measure'];
  look = ':host { width: 52px; padding-left: 4px; padding-right: 5px; --icon: 24px; --pad: 0 1px 1px 0; } icon-button { width: 43px; height: 33px; }';
}

class CommandBar extends ButtonColumn {
  items = ['newDoc', 'open', 'save', 'print', '|', 'importDoc', 'exportDoc', '|', 'undo', '~redo', '|', 'copy', 'cut', 'paste', '|',
    'zoomSel', 'zoomDraw', 'zoomPage', 'fitPage', '|', 'duplicate', 'clone', 'unlink', '|', 'group', 'ungroup', '|'];
  look = ':host { width: 48px; padding-left: 6px; padding-right: 6px; } svg { margin: auto auto 15px; flex: none; }';
  tail = '<svg width="5" height="10"><path d="M0 0l5 5-5 5z" fill="#222"/></svg>';
}

class SnapBar extends ButtonColumn {
  items = ['*snap', '|', 'snap', '~snapBox', '~snapBoxCorner', '~snapBoxMid', '~snapBoxCenter', '|', '*snap', 'snapPath', 'snapCross',
    '*snapCusp', 'snapSmooth', 'snapMid', '|', '*snap', 'snapCenter', 'snapRotation', 'snapText', '|', 'snapPage', '*snapGrid', '*snapGuide'];
  look = ':host { width: 42px; padding-left: 2px; padding-right: 4px; }';
}

// pixels per 100 units
const SCALE = 132.15;
class InkRuler extends HTMLElement {
  connectedCallback() {
    this.attachShadow({ mode: 'open' }).innerHTML = `
      <style>
        :host { display: block; min-width: 0; min-height: 0; overflow: hidden; contain: size; }
        svg { display: block; width: 100%; height: 100%; }
        path { stroke: #2e3436; fill: none; }
        .mark { fill: #2e3436; }
        text { font: 12px "Noto Sans", sans-serif; fill: #555; }
      </style>
      <svg></svg>`;
    new ResizeObserver(() => this.draw()).observe(this);
  }

  draw() {
    const vertical = this.hasAttribute('vertical');
    const length = vertical ? this.clientHeight : this.clientWidth;
    const step = vertical ? 5 : 10;
    const major = step * 10;
    const zero = vertical ? 213.3 : 731.3;
    let art = '';
    for (let u = vertical ? -160 : -550; ; u += step) {
      const at = Math.round(zero + u * SCALE / 100);
      if (at > length) break;
      if (at < 0) continue;
      const big = u % major === 0;
      const size = big ? 18 : u % (major / 2) === 0 ? 9 : 5;
      art += vertical ? `<path d="M${18 - size} ${at}.5h${size}"/>` : `<path d="M${at}.5 ${18 - size}v${size}"/>`;
      if (!big) continue;
      if (vertical) {
        [...String(u)].forEach((c, i) => {
          const y = at + 12 + i * 12;
          if (y <= length) art += `<text x="8" y="${y}" text-anchor="middle">${c}</text>`;
        });
      } else if (at + 30 < length) {
        art += `<text x="${at + 3}" y="13">${u}</text>`;
      }
    }
    art += vertical ? `<path d="M17.5 0v${length}"/>` : `<path d="M0 17.5h${length}"/><path d="M0 13h7l-3.500 4z" class="mark"/>`;
    this.shadowRoot.querySelector('svg').innerHTML = art;
  }
}

class InkDrawing extends HTMLElement {
  connectedCallback() {
    const straight = '<path d="M-6.500 0l4.500-4.500V-2h4v-2.500L6.500 0 2 4.500V2h-4v2.500z"/>';
    const bent = '<path d="M2-6.500L6.500-2 2 2.500V0Q-.5 0 0 2h2.500L-2 6.500-6.500 2H-4Q-4-4 2-4z"/>';
    const put = (x, y, turn, art) => `<g transform="translate(${x} ${y}) rotate(${turn})">${art}</g>`;
    this.attachShadow({ mode: 'open' }).innerHTML = `
      <style>
        :host { display: block; background: #fff; min-width: 0; min-height: 0; overflow: hidden; contain: size; }
        svg { display: block; width: 100%; height: 100%; }
      </style>
      <svg>
        <g transform="translate(731 214)">
          <path d="M374 1h2v393H2v-2h372z" fill="#666"/>
          <path d="M.5 .5h373v391H.5z" fill="#fff" stroke="#666"/>
          <path d="M137 49h140v16H137z"/>
          <path d="M82 137.500l145-2.500v15.500L82 153z"/>
          <path d="M81.500 134.500h146v19h-146z" fill="none" stroke="#5555dd" stroke-dasharray="5 3"/>
          <path d="M149 143.500h11M154.500 138v11" stroke="#fff"/>
          ${put(154.5, 126.5, 0, straight)}${put(154.5, 161.5, 0, straight)}
          ${put(73.5, 143.5, 90, straight)}${put(235.5, 143.5, 90, straight)}
          ${put(75.5, 128, 0, bent)}${put(233.5, 128, 90, bent)}
          ${put(233.5, 159.5, 180, bent)}${put(75.5, 159.5, 270, bent)}
        </g>
      </svg>`;
  }
}

class InkDesktop extends HTMLElement {
  connectedCallback() {
    this.attachShadow({ mode: 'open' }).innerHTML = `
      <style>
        :host { display: grid; grid-template: 18px minmax(0, 1fr) 18px / 18px minmax(0, 1fr) 18px; border-right: 1px solid var(--edge); }
        .lock { width: 18px; height: 18px; --icon: 16px; }
        .v, .h { background: var(--trough); display: flex; }
        .v { flex-direction: column; align-items: center; padding: 92px 0; }
        .h { grid-column: 2; align-items: center; padding: 0 3px; }
        .v i { width: 6px; flex: 1; border-radius: 3px; background: var(--thumb); }
        .h i { height: 6px; flex: 1; border-radius: 3px; background: var(--thumb); }
        .corner { padding: 0; border: 1px solid #aaa; border-radius: 4px; background: #eee; }
        .color { border-color: var(--edge); background: #f6f5f4; }
        svg { display: block; margin: auto; }
      </style>
      <icon-button class="lock" icon="lockRuler" pressed></icon-button>
      <ink-ruler></ink-ruler>
      <button class="corner" aria-label="缩放"><svg width="10" height="10"><path d="M2.500 .5h5v9h-3v-6h-2z" fill="#fff" stroke="#999"/></svg></button>
      <ink-ruler vertical></ink-ruler>
      <ink-drawing></ink-drawing>
      <div class="v"><i></i></div>
      <div class="h"><i></i></div>
      <button class="corner color" aria-label="色彩管理"><svg width="14" height="14">
        <linearGradient id="c" x1="0" y1="0" x2="1" y2="1"><stop stop-color="#8ff0a0"/><stop offset=".5" stop-color="#dcd6f5"/><stop offset="1" stop-color="#ff9cb8"/></linearGradient>
        <path d="M2 0q9 3 11 10L3 14z" fill="url(#c)"/></svg></button>`;
  }
}

class ColorPalette extends HTMLElement {
  connectedCallback() {
    this.attachShadow({ mode: 'open' }).innerHTML = `
      <style>
        :host { display: grid; grid-template-columns: minmax(0, 1fr) 36px; }
        .row { display: flex; height: 21px; }
        .none { width: 19px; padding: 0; border: 0; background: #fff; }
        .none svg { display: block; }
        .greys { flex: 1; background: linear-gradient(90deg, #000, #626262); }
        .bar { display: flex; align-items: center; height: 13px; padding-left: 3px; background: var(--trough); }
        .bar i { width: 720px; height: 6px; border-radius: 3px; background: var(--thumb); }
        .more { grid-area: 1 / 2; padding: 0 2px 0 0; border: 0; background: none; }
      </style>
      <div>
        <div class="row">
          <button class="none" aria-label="无"><svg width="19" height="21"><path d="M0 0l19 21M19 0L0 21" stroke="#800000" stroke-width="1.5"/></svg></button>
          <div class="greys"></div>
        </div>
        <div class="bar"><i></i></div>
      </div>
      <button class="more" aria-label="色板"><svg width="5" height="10"><path d="M5 0L0 5l5 5z" fill="#222"/></svg></button>`;
  }
}

class StatusBar extends HTMLElement {
  connectedCallback() {
    this.attachShadow({ mode: 'open' }).innerHTML = `
      <style>
        :host { display: flex; align-items: center; height: 40px; white-space: nowrap; }
        .style, .xy { display: grid; column-gap: 4px; align-content: center; }
        .style { box-sizing: border-box; width: 122px; padding-left: 2px; grid-template-columns: 45px auto auto; }
        i { font-style: normal; font-size: 14px; }
        b { font-weight: 500; }
        spin-field { height: 39px; }
        .opacity { --label: 32px; --box: 68px; }
        hr { width: 1px; height: 100%; margin: 0 0 0 2px; border: 0; background: var(--line); }
        icon-button { --icon: 17px; }
        .layer {
          display: flex; justify-content: center; align-items: center; gap: 6px; box-sizing: border-box; width: 86px; height: 39px; margin-left: 1px; padding: 0;
          border: 1px solid var(--edge); border-radius: 5px; background: linear-gradient(#f8f7f6, #edebe9); font: inherit; font-size: 14px; font-weight: 500; color: #222;
        }
        p { flex: 1; margin: 0 0 0 2px; font-size: 14px; }
        p b { margin-right: 11px; font-size: 16px; font-weight: 700; }
        p span { margin-right: 2px; font-size: 16px; }
        p span b { margin: 0; }
        .xy { width: 85px; margin-left: 10px; grid-template-columns: auto auto; justify-content: space-between; font-size: 14px; }
        .xy i { text-align: right; }
        .zoom { --label: 44px; --box: 99px; --step: 21px; --align: right; --end: 9px; }
        .turn { --label: 51px; --box: 107px; --step: 21px; --align: right; --end: 7px; margin-right: 12px; }
      </style>
      <div class="style"><span>填充:</span><b>未设</b><i></i><span>笔刷:</span><b>未设</b><i>0.265</i></div>
      <spin-field class="opacity" label="O:" value="100" full></spin-field>
      <hr>
      <icon-button icon="eye"></icon-button>
      <icon-button icon="lockOpen"></icon-button>
      <button class="layer">·图层 1<svg width="10" height="7"><path d="M0 0h10L5 6z" fill="#333"/></svg></button>
      <p><b>矩形</b><span>在层<b>图层 1.</b></span> Click selection to toggle scale/rotation handles (or Shift+s).</p>
      <hr>
      <div class="xy"><span>X:</span><i>-550.33</i><span>Y:</span><i>-113.39</i></div>
      <spin-field class="zoom" label="Z:" value="35%"></spin-field>
      <spin-field class="turn" label="红:" value="0.00º"></spin-field>`;
  }
}

class TaskBar extends HTMLElement {
  connectedCallback() {
    const system = [['windows', 20], ['search', 20], ['cortana', 20]];
    const apps = [['store', 28], ['edge', 25], ['meeting', 30], ['phone', 30, 'open'], ['qq', 30, 'open'], ['inkscape', 28, 'open active']];
    const button = ([name, size, state = '']) =>
      `<button class="${state}" aria-label="${name}"><ink-icon name="${name}" style="--icon: ${size}px"></ink-icon></button>`;
    this.attachShadow({ mode: 'open' }).innerHTML = `
      <style>
        :host { position: relative; display: flex; align-items: center; height: 50px; background: #1b2b30; color: #fff; }
        button { display: grid; place-items: center; box-sizing: border-box; width: 60px; height: 50px; padding: 0; border: 0; background: none; }
        .apps { display: flex; margin-left: 3px; }
        .apps button { width: 62px; }
        .apps .open { background: linear-gradient(#76b9ed, #76b9ed) center bottom / 51px 3px no-repeat; }
        .apps .active { background-color: #475559; background-size: 100% 3px; }
        .tray { display: flex; align-items: center; margin-left: auto; }
        .tray button { width: 30px; --icon: 19px; }
        .ime { width: 28px; font-size: 20px; text-align: center; }
        .pin { width: 19px; height: 20px; margin: 0 9px 0 13px; background: #fff; color: #000; font-size: 17px; line-height: 18px; text-align: center; }
        time { width: 100px; margin-right: 10px; line-height: 22px; text-align: center; }
        .tray .notice { width: 24px; --icon: 20px; margin-right: 24px; }
        .edge { width: 1px; height: 50px; margin-right: 4px; background: #6a7578; }
        .mark { position: absolute; right: 11px; bottom: 9px; font: 16px/20px "Liberation Sans", sans-serif; color: #fff9; }
      </style>
      ${system.map(button).join('')}
      <div class="apps">${apps.map(button).join('')}</div>
      <div class="tray">
        ${['chevron', 'battery', 'wifi', 'sound'].map(n => `<button aria-label="${n}"><ink-icon name="${n}"></ink-icon></button>`).join('')}
        <span class="ime">中</span>
        <span class="pin">拼</span>
        <time datetime="2020-06-15T09:47">9:47<br>2020/6/15</time>
        <button class="notice" aria-label="notice"><ink-icon name="notice"></ink-icon></button>
        <span class="edge"></span>
      </div>
      <span class="mark">https://blog.csdn.net/jcctfx</span>`;
  }
}

class ToolTip extends HTMLElement {
  connectedCallback() {
    this.attachShadow({ mode: 'open' }).innerHTML = `
      <style>
        :host {
          position: absolute; left: 1px; top: 142px; padding: 13px 15px 13px 12px; border-radius: 5px;
          background: rgba(0, 0, 0, .8); color: #fff; white-space: nowrap;
        }
      </style>
      <slot></slot>`;
  }
}

class LevelMeter extends HTMLElement {
  connectedCallback() {
    const colors = ['#333945', '#333945', '#333945', '#333945', '#333945', '#d99a55', '#d9a955', '#d9b955', '#d2c555', '#c5cc55', '#b5cf5c',
      '#a3cf66', '#93cf70', '#83cf80', '#73cf90', '#63cfa0', '#55cfae', '#4ccfb5'];
    this.attachShadow({ mode: 'open' }).innerHTML = `
      <style>
        :host {
          position: absolute; right: 0; top: 845px; display: flex; flex-direction: column; gap: 1px; box-sizing: border-box;
          width: 13px; height: 74px; padding: 9px 2px 0 5px; border: 1px solid #3f444e; border-right: 0; border-radius: 5px 0 0 5px; background: #5b6272;
        }
        i { height: 2px; }
      </style>
      ${colors.map(c => `<i style="background: ${c}"></i>`).join('')}`;
  }
}

customElements.define('ink-icon', InkIcon);
customElements.define('icon-button', IconButton);
customElements.define('spin-field', SpinField);
customElements.define('title-bar', TitleBar);
customElements.define('menu-bar', MenuBar);
customElements.define('select-toolbar', SelectToolbar);
customElements.define('tool-box', ToolBox);
customElements.define('command-bar', CommandBar);
customElements.define('snap-bar', SnapBar);
customElements.define('ink-ruler', InkRuler);
customElements.define('ink-drawing', InkDrawing);
customElements.define('ink-desktop', InkDesktop);
customElements.define('color-palette', ColorPalette);
customElements.define('status-bar', StatusBar);
customElements.define('task-bar', TaskBar);
customElements.define('tool-tip', ToolTip);
customElements.define('level-meter', LevelMeter);
</script>
</body>
</html>
